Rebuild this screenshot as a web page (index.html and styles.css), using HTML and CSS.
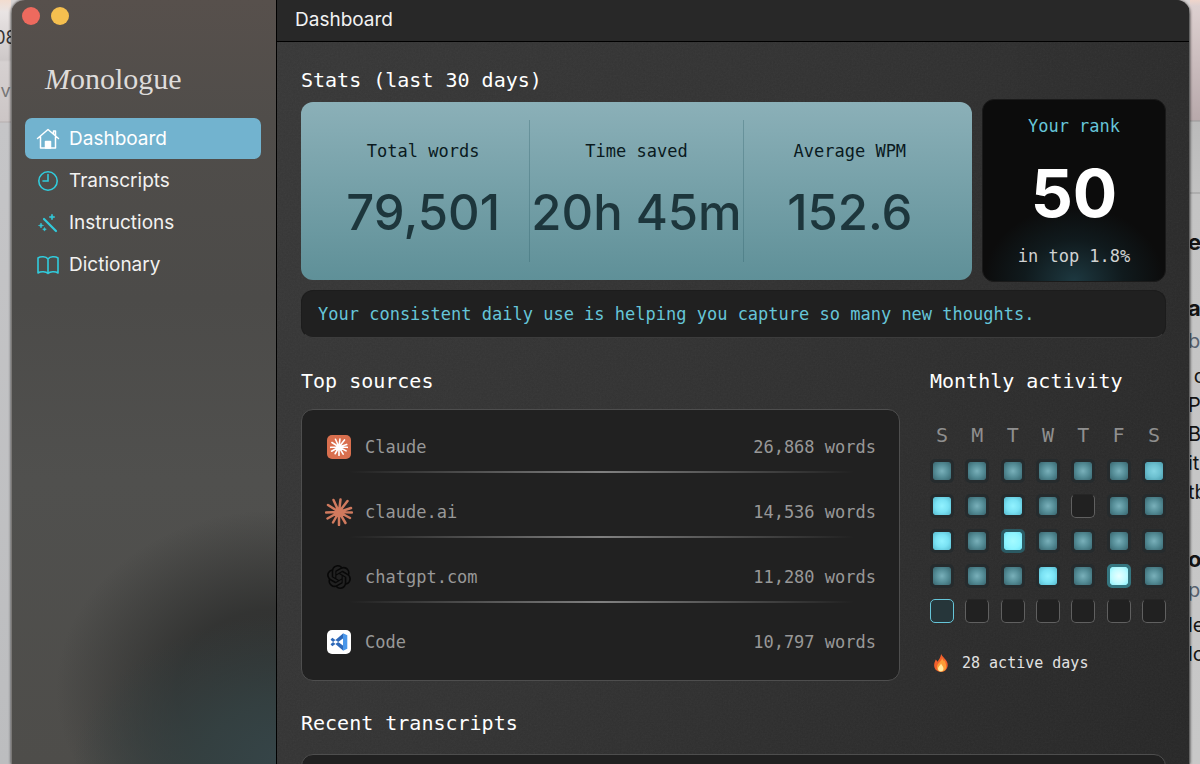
FILE: index.html
```html
<!DOCTYPE html>
<html lang="en">
<head>
  <meta charset="UTF-8" />
  <meta name="viewport" content="width=device-width, initial-scale=1.0"/>
  <title>Monologue - Dashboard</title>
  <link rel="stylesheet" href="styles.css">
</head>
<body>

  <!-- shared shapes -->
  <svg class="defs" width="0" height="0" aria-hidden="true">
    <symbol id="burst" viewBox="0 0 28 28">
      <g stroke="currentColor" stroke-width="2.500" stroke-linecap="round" fill="none">
        <path d="M14 14L15.500 1.500M14 14L22.500 3M14 14L26 10M14 14L27 14.500M14 14L25 20M14 14L20.500 25M14 14L14 27M14 14L8 24.500M14 14L2.500 20.500M14 14L1 14.500M14 14L3 7M14 14L8.500 2"/>
      </g>
      <circle cx="14" cy="14" r="4" fill="currentColor"/>
    </symbol>
    <filter id="grain">
      <feTurbulence type="fractalNoise" baseFrequency="0.6" numOctaves="2"/>
      <feColorMatrix type="saturate" values="0"/>
    </filter>
  </svg>

  <div class="desktop">
    <div class="behind behind-left" aria-hidden="true">
      <span class="tab">08</span>
      <span class="url">v</span>
    </div>

    <div class="window">
      <aside class="sidebar">
        <div class="lights">
          <button class="light close" aria-label="Close"></button>
          <button class="light minimize" aria-label="Minimize"></button>
        </div>
        <div class="logo"><em>M</em>onologue</div>
        <nav class="nav">
          <a href="#" class="active">
            <svg viewBox="0 0 24 24" width="24" height="24" fill="none" stroke="currentColor" stroke-width="1.500" stroke-linecap="round" stroke-linejoin="round">
              <path d="M1.500 11.500L12 2.500l10.500 9M4.500 9.500v11.500h15V9.500M17.500 7V4h2v4.500"/>
              <path d="M9.500 21v-6.500h5V21z" fill="currentColor"/>
            </svg>
            Dashboard
          </a>
          <a href="#">
            <svg viewBox="0 0 24 24" width="24" height="24" fill="none" stroke="currentColor" stroke-width="1.600" stroke-linecap="round">
              <circle cx="12" cy="12" r="9.200"/>
              <path d="M12 5.500V12H7"/>
            </svg>
            Transcripts
          </a>
          <a href="#">
            <svg viewBox="0 0 24 24" width="24" height="24" fill="currentColor">
              <path d="M8 8L20 20" stroke="currentColor" stroke-width="2.200" stroke-linecap="round"/>
              <path d="M16 3l.8 2.200L19 6l-2.200.8L16 9l-.8-2.200L13 6l2.200-.8zM5 12l.6 1.900 1.900.6-1.900.6L5 17l-.6-1.900-1.900-.6 1.900-.6zM8.500 16.500l.5 1.300 1.300.5-1.300.5-.5 1.300-.5-1.300-1.300-.5 1.300-.5z" stroke="currentColor" stroke-width=".6"/>
            </svg>
            Instructions
          </a>
          <a href="#">
            <svg viewBox="0 0 24 24" width="24" height="24" fill="none" stroke="currentColor" stroke-width="1.600" stroke-linejoin="round">
              <path d="M12 6C10 3.500 5 3 2 5v15c3-2 8-1.500 10 .5 2-2 7-2.500 10-.5V5c-3-2-8-1.500-10 1zM12 6v14.500"/>
            </svg>
            Dictionary
          </a>
        </nav>
      </aside>

      <main class="main">
        <header class="titlebar">Dashboard</header>

        <div class="content">
          <svg class="grain" aria-hidden="true"><rect width="100%" height="100%" filter="url(#grain)"/></svg>

          <h2>Stats (last 30 days)</h2>
          <div class="stats-row">
            <div class="stats">
              <div class="stat">
                <div class="label">Total words</div>
                <div class="value">79,501</div>
              </div>
              <div class="stat">
                <div class="label">Time saved</div>
                <div class="value">20h 45m</div>
              </div>
              <div class="stat">
                <div class="label">Average WPM</div>
                <div class="value">152.6</div>
              </div>
            </div>
            <div class="rank">
              <div class="rank-label">Your rank</div>
              <div class="rank-value">50</div>
              <div class="rank-note">in top 1.8%</div>
            </div>
          </div>
          <p class="banner">Your consistent daily use is helping you capture so many new thoughts.</p>

          <div class="columns">
            <section class="sources">
              <h2>Top sources</h2>
              <ul class="panel">
                <li>
                  <svg viewBox="0 0 24 24" width="24" height="24"><rect width="24" height="24" rx="5" fill="#d96f4e"/><use href="#burst" x="3" y="3" width="18" height="18" color="#fff"/></svg>
                  <span>Claude</span><span class="count">26,868 words</span>
                </li>
                <li>
                  <svg class="bleed" viewBox="0 0 28 28" width="28" height="28"><use href="#burst" width="28" height="28" color="#d07a5e"/></svg>
                  <span>claude.ai</span><span class="count">14,536 words</span>
                </li>
                <li>
                  <svg viewBox="0 0 24 24" width="24" height="24" fill="#080808"><path d="M22.2819 9.8211a5.9847 5.9847 0 0 0-.5157-4.9108 6.0462 6.0462 0 0 0-6.5098-2.9A6.0651 6.0651 0 0 0 4.9807 4.1818a5.9847 5.9847 0 0 0-3.9977 2.9 6.0462 6.0462 0 0 0 .7427 7.0966 5.98 5.98 0 0 0 .511 4.9107 6.051 6.051 0 0 0 6.5146 2.9001A5.9847 5.9847 0 0 0 13.2599 24a6.0557 6.0557 0 0 0 5.7718-4.2058 5.9894 5.9894 0 0 0 3.9977-2.9001 6.0557 6.0557 0 0 0-.7475-7.0729zm-9.022 12.6081a4.4755 4.4755 0 0 1-2.8764-1.0408l.1419-.0804 4.7783-2.7582a.7948.7948 0 0 0 .3927-.6813v-6.7369l2.02 1.1686a.071.071 0 0 1 .038.052v5.5826a4.504 4.504 0 0 1-4.4945 4.4944zm-9.6607-4.1254a4.4708 4.4708 0 0 1-.5346-3.0137l.142.0852 4.783 2.7582a.7712.7712 0 0 0 .7806 0l5.8428-3.3685v2.3324a.0804.0804 0 0 1-.0332.0615L9.74 19.9502a4.4992 4.4992 0 0 1-6.1408-1.6464zM2.3408 7.8956a4.485 4.485 0 0 1 2.3655-1.9728V11.6a.7664.7664 0 0 0 .3879.6765l5.8144 3.3543-2.0201 1.1685a.0757.0757 0 0 1-.071 0l-4.8303-2.7865A4.504 4.504 0 0 1 2.3408 7.872zm16.5963 3.8558L13.1038 8.364 15.1192 7.2a.0757.0757 0 0 1 .071 0l4.8303 2.7913a4.4944 4.4944 0 0 1-.6765 8.1042v-5.6772a.79.79 0 0 0-.407-.667zm2.0107-3.0231l-.142-.0852-4.7735-2.7818a.7759.7759 0 0 0-.7854 0L9.409 9.2297V6.8974a.0662.0662 0 0 1 .0284-.0615l4.8303-2.7866a4.4992 4.4992 0 0 1 6.6802 4.66zM8.3065 12.863l-2.02-1.1638a.0804.0804 0 0 1-.038-.0567V6.0742a4.4992 4.4992 0 0 1 7.3757-3.4537l-.142.0805L8.704 5.459a.7948.7948 0 0 0-.3927.6813zm1.0976-2.3654l2.602-1.4998 2.6069 1.4998v2.9994l-2.5974 1.4997-2.6067-1.4997Z"/></svg>
                  <span>chatgpt.com</span><span class="count">11,280 words</span>
                </li>
                <li>
                  <svg viewBox="0 0 24 24" width="24" height="24">
                    <rect width="24" height="24" rx="5" fill="#fff"/>
                    <path d="M3.500 14.300L16 3.500v5L5.300 16.200zM3.500 9.700L16 20.500v-5L5.300 7.800z" fill="#2d68b8"/>
                    <path d="M16 3.300l4.300 2v13.400l-4.300 2z" fill="#4a97ea"/>
                  </svg>
                  <span>Code</span><span class="count">10,797 words</span>
                </li>
              </ul>
            </section>

            <section class="activity">
              <h2>Monthly activity</h2>
              <div class="calendar">
                <b>S</b><b>M</b><b>T</b><b>W</b><b>T</b><b>F</b><b>S</b>

                <i class="l1"></i><i class="l1"></i><i class="l1"></i><i class="l1"></i><i class="l1"></i><i class="l1"></i><i class="l2"></i>
                <i class="l3"></i><i class="l1"></i><i class="l3"></i><i class="l1"></i><i class="off"></i><i class="l1"></i><i class="l1"></i>
                <i class="l3"></i><i class="l1"></i><i class="l4"></i><i class="l1"></i><i class="l1"></i><i class="l1"></i><i class="l1"></i>
                <i class="l1"></i><i class="l1"></i><i class="l1"></i><i class="l3"></i><i class="l1"></i><i class="l5"></i><i class="l1"></i>
                <i class="today"></i><i class="off"></i><i class="off"></i><i class="off"></i><i class="off"></i><i class="off"></i><i class="off"></i>
              </div>
              <div class="streak">
                <svg viewBox="0 0 20 20" width="20" height="20">
                  <path d="M10.200 1c.8 3 5.300 5 6.300 9.200 1 4.800-2 8.600-6.500 8.600s-7.300-3.200-6.800-7.600c.2-2 1.200-3.200 1.500-4.700.9.600 1.400 1.300 1.600 2.200C8 7 9.500 4.500 10.200 1z" fill="#f2602c"/>
                  <path d="M14 6.500c-.3 1.500-1 2-1 2-.5-1.500-1.500-2-2-3.500.2 3-4.500 5-5 8.500-.4 3 1.500 5 4.200 5 3 0 5-2 5-5 0-2.500-1.200-4-1.200-7z" fill="#fb9d36"/>
                  <path d="M10 10.500c.3 1.500 2.500 2.500 2.500 5 0 2-1.200 3-2.700 3S7 17.300 7 15.700c0-2.200 2.400-3 3-5.200z" fill="#ffe9a0"/>
                </svg>
                28 active days
              </div>
            </section>
          </div>

          <h2>Recent transcripts</h2>
          <div class="panel transcripts"></div>
        </div>
      </main>
    </div>

    <div class="behind behind-right" aria-hidden="true">
      <p class="head">ed</p>
      <p class="head">as</p>
      <p class="link">ba</p>
      <p>&nbsp;d</p>
      <p>P.</p>
      <p>Br</p>
      <p>it</p>
      <p>tb</p>
      <p class="head second">op</p>
      <p class="link">p</p>
      <p>le</p>
      <p>lo</p>
    </div>
  </div>

</body>
</html>
```
FILE: styles.css
```css
* { box-sizing: border-box; margin: 0; padding: 0; }

body {
  height: 100vh;
  overflow: hidden;
  background: #d8d4d4;
  font-family: Inter, "Liberation Sans", sans-serif;
}

.defs { position: absolute; }

.desktop {
  display: grid;
  grid-template-columns: 11px minmax(0, 1fr) 10px;
  height: 100vh;
}

/* page that shows on both sides of the window */
.behind {
  overflow: hidden;
  white-space: nowrap;
}

.behind-left {
  display: flex;
  flex-direction: column;
  align-items: center;
  background: linear-gradient(to bottom, #f2dccf 0, #e9e4e4 12px, #cdc8c8 60px, #d6d1d1 62px, #ccc6c6 121px, #b5aeae 122px, #c5c5c7 123px, #bcbdbf 100%);
}

.tab {
  margin-top: 24px;
  font-size: 18px;
  line-height: 28px;
  color: #333;
}

.url {
  margin-top: 26px;
  font-size: 18px;
  line-height: 26px;
  color: #777;
}

.behind-right {
  padding-top: 227px;
  background: linear-gradient(to bottom, #efd5cb 0, #ddd0d0 6px, #b8a9ab 120px, #999 121px, #bbb 122px, #c2c2c2 192px, #999 193px, #c4c4c4 194px, #c8c8c8 100%);
  font-size: 20px;
  line-height: 29px;
  color: #141414;
}

.behind-right p { margin-left: -2px; }

.behind-right .head {
  margin-bottom: 6px;
  font-size: 22px;
  font-weight: 700;
  line-height: 30px;
}

.behind-right .head + .head { margin-top: 36px; margin-bottom: 4px; }

.behind-right .head.second { margin-top: 37px; margin-bottom: 2px; }

.behind-right .link {
  margin-bottom: 6px;
  color: #56616f;
}

.window {
  display: grid;
  grid-template-columns: 266px minmax(0, 1fr);
  overflow: hidden;
  border-radius: 14px 14px 0 0;
  box-shadow: 0 0 3px rgba(0, 0, 0, 0.8);
  z-index: 1;
}

/* sidebar */
.sidebar {
  padding: 0 15px 0 13px;
  border-left: 1px solid #7a7876;
  border-right: 1px solid #000;
  background:
    radial-gradient(ellipse 230px 150px at 110% 100%, #36464a 0, rgba(52, 65, 66, 0.9) 45%, rgba(52, 62, 62, 0) 100%),
    radial-gradient(ellipse 220px 180px at 100% 690px, #303130 0, rgba(48, 49, 48, 0.9) 45%, rgba(60, 58, 56, 0) 100%),
    linear-gradient(to bottom, #57504c 0, #504d4a 120px, #4c4b49 300px, #50504e 480px, #4e4d4a 100%);
}

.lights {
  display: flex;
  gap: 11px;
  padding-top: 7px;
  margin-left: -3px;
}

.light {
  width: 18px;
  height: 18px;
  border: 0;
  border-radius: 50%;
}

.close { background: #ed6a5e; }
.minimize { background: #f5bf4f; }

.logo {
  margin: 35px 0 20px 20px;
  font-family: "Liberation Serif", serif;
  font-size: 30px;
  line-height: 38px;
  color: #dedcda;
}

.nav {
  display: flex;
  flex-direction: column;
  gap: 1px;
}

.nav a {
  display: flex;
  align-items: center;
  gap: 9px;
  height: 41px;
  padding-left: 11px;
  border-radius: 7px;
  font-size: 19px;
  color: #f2f1f0;
  text-decoration: none;
}

.nav svg { color: #31cbdc; }

.nav .active { background: #72b3cf; color: #fff; }
.nav .active svg { color: #fff; }

/* main area */
.main {
  display: flex;
  flex-direction: column;
  border-right: 1px solid #666;
  background: linear-gradient(115deg, #383838 0, #323232 45%, #272727 100%);
  overflow: hidden;
}

.titlebar {
  flex-shrink: 0;
  height: 42px;
  padding-left: 18px;
  border-bottom: 1px solid #000;
  background: #282828;
  font-size: 19px;
  line-height: 40px;
  color: #f2f2f2;
}

.content {
  position: relative;
  isolation: isolate;
  flex: 1;
  padding: 24px 23px 0 24px;
  font-family: "DejaVu Sans Mono", monospace;
  font-size: 17px;
  line-height: 26px;
}

.grain {
  position: absolute;
  top: 0;
  left: 0;
  z-index: -1;
  width: 100%;
  height: 100%;
  opacity: 0.05;
}

h2 {
  font-size: 20px;
  font-weight: 400;
  line-height: 28px;
  color: #fff;
}

.stats-row {
  display: flex;
  align-items: center;
  gap: 10px;
  margin: 5px 0 8px;
}

.stats {
  flex: 1;
  display: flex;
  padding: 18px 16px;
  border-radius: 12px;
  background: linear-gradient(to bottom, #8bb0b8 0, #75a0a8 50%, #5f9098 100%);
}

.stat {
  flex: 1 1 0;
  height: 142px;
  padding-top: 18px;
  text-align: center;
  white-space: nowrap;
}

.stat + .stat { border-left: 1px solid rgba(40, 90, 100, 0.3); }

.label { color: #0a1a1e; }

.value {
  margin-top: 19px;
  font-family: Inter, sans-serif;
  font-size: 49px;
  font-weight: 500;
  line-height: 60px;
  color: #1d363c;
}

.rank {
  width: 184px;
  height: 183px;
  padding-top: 13px;
  border: 1px solid #1a1a1a;
  border-radius: 12px;
  background: radial-gradient(ellipse 90px 75px at 50% 100%, #1d3840 0, rgba(20, 40, 46, 0.5) 55%, rgba(12, 12, 12, 0) 100%), #0c0c0c;
  text-align: center;
}

.rank-label { color: #66c5d8; }

.rank-value {
  margin: 14px 0 10px;
  font-family: Inter, sans-serif;
  font-size: 66px;
  font-weight: 700;
  line-height: 80px;
  color: #fff;
}

.rank-note { color: #d0d2d2; }

.banner {
  padding: 10px 16px;
  border: 1px solid #1c1c1c;
  border-bottom-color: #3c3c3c;
  border-radius: 12px;
  background: #202020;
  color: #66c5d8;
  white-space: nowrap;
}

.columns {
  display: grid;
  grid-template-columns: minmax(0, 1fr) 236px;
  gap: 30px;
  margin: 29px 0 28px;
}

.panel {
  margin-top: 14px;
  padding: 0 23px 0 25px;
  border: 1px solid #4e4e4e;
  border-radius: 12px;
  background: #212121;
  list-style: none;
}

.panel li {
  display: flex;
  align-items: center;
  gap: 14px;
  padding: 26px 0 12px;
  color: #989898;
}

.panel li:first-child { padding-top: 24px; }
.panel li:last-child { padding-bottom: 25px; }

/* divider fades out at both ends */
.panel li:not(:last-child) {
  padding-bottom: 13px;
  background: linear-gradient(to right, rgba(128, 128, 128, 0) 4%, #808080 50%, rgba(128, 128, 128, 0) 96%) bottom / 100% 2px no-repeat;
}

.bleed { margin: -2px; }

.count { margin-left: auto; }

.calendar {
  display: grid;
  grid-template-columns: repeat(7, 24px);
  justify-content: space-between;
  row-gap: 11px;
  margin-top: 27px;
}

.calendar b {
  font-size: 20px;
  font-weight: 400;
  line-height: 26px;
  text-align: center;
  color: #8f8f8f;
}

.calendar i {
  height: 24px;
  border: 3px solid #262b2d;
  border-radius: 5px;
  background-clip: padding-box;
}

.calendar .l1 { background-image: radial-gradient(circle, #79b0ba 0, #558d97 50%, #37646d 100%); }
.calendar .l2 { background-image: radial-gradient(circle, #84d4e2 0, #6cc0d0 50%, #4a9aaa 100%); }
.calendar .l3 { background-image: radial-gradient(circle, #92f2ff 0, #7ae2f4 50%, #55b8cc 100%); }

.calendar .l4 {
  border-color: #2b5a63;
  background-image: radial-gradient(circle, #a4fbff 0, #8df4ff 60%, #6be0f2 100%);
}

.calendar .l5 {
  border-color: #357680;
  background-image: radial-gradient(circle, #e8ffff 0, #bdfbff 60%, #86f0fc 100%);
}

.calendar .off {
  border: 1px solid #606060;
  border-top-color: #262626;
  background: #212121;
}

.calendar .today {
  border: 1px solid #66c5d8;
  background: #26363a;
}

.streak {
  display: flex;
  align-items: center;
  gap: 11px;
  margin: 27px 0 0 1px;
  font-size: 15px;
  color: #e2e2e2;
}

.transcripts {
  margin-top: 17px;
  height: 120px;
}
```
